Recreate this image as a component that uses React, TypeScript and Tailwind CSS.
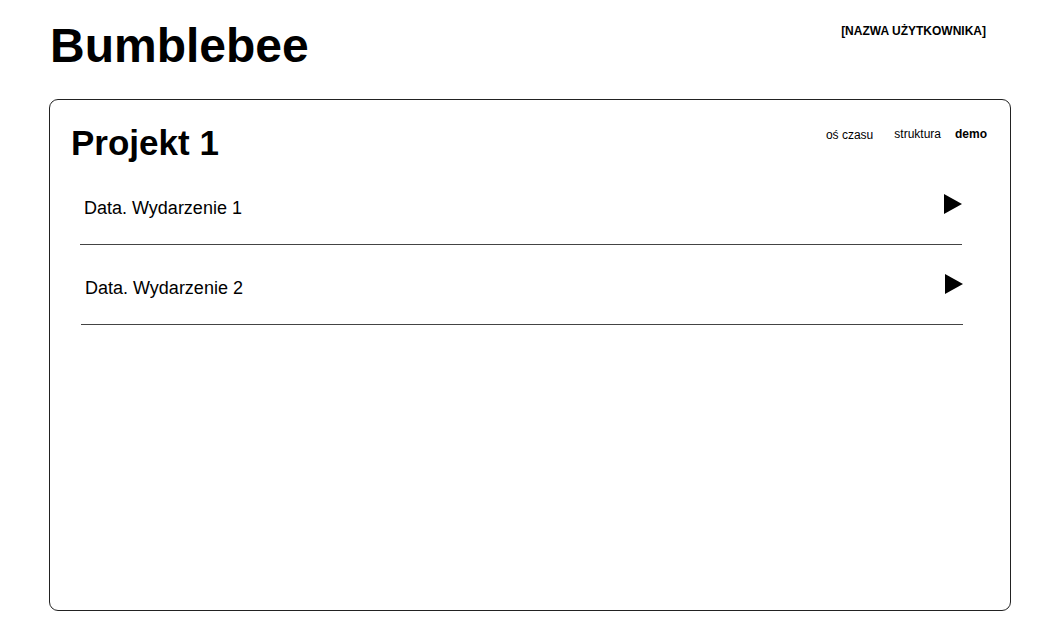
const events = ["Data. Wydarzenie 1", "Data. Wydarzenie 2"];

function PlayTriangle() {
  return (
    <svg width="18" height="20" viewBox="0 0 18 20" className="block">
      <polygon points="0,0 18,10 0,20" fill="#000" />
    </svg>
  );
}

export default function App() {
  return (
    <div
      className="w-[1060px] h-[639px] bg-white text-black px-[49px] pt-[18px]"
      style={{ fontFamily: '"Liberation Sans", Arial, sans-serif' }}
    >
      {/* Header */}
      <div className="flex justify-between items-start h-[81px]">
        <h1 className="text-[48px] leading-[56px] font-bold pl-[1px]">Bumblebee</h1>
        <div className="text-[12px] font-bold pt-[4px] pr-[25px]">[NAZWA UŻYTKOWNIKA]</div>
      </div>

      {/* Card */}
      <div className="h-[512px] border border-[#222] rounded-[9px] pt-[22px]">
        <div className="flex justify-between items-start pl-[21px] pr-[23px]">
          <h2 className="text-[35px] leading-[42px] font-bold">Projekt 1</h2>
          <nav className="flex items-start text-[12px] pt-[3px]">
            <span className="pt-[1px]">oś czasu</span>
            <span className="ml-[21px]">struktura</span>
            <span className="ml-[14px] font-bold">demo</span>
          </nav>
        </div>
        <div className="ml-[30px] mr-[48px] mt-[1px]">
          {events.map((ev, i) => (
            <div
              key={ev}
              className={`h-[80px] flex items-center justify-between border-b border-[#444] ${i === 1 ? "ml-[1px] -mr-[1px]" : ""}`}
            >
              <span className="text-[18px] pt-[7px] pl-[4px]">{ev}</span>
              <span className="pb-[2px]">
                <PlayTriangle />
              </span>
            </div>
          ))}
        </div>
      </div>
    </div>
  );
}
